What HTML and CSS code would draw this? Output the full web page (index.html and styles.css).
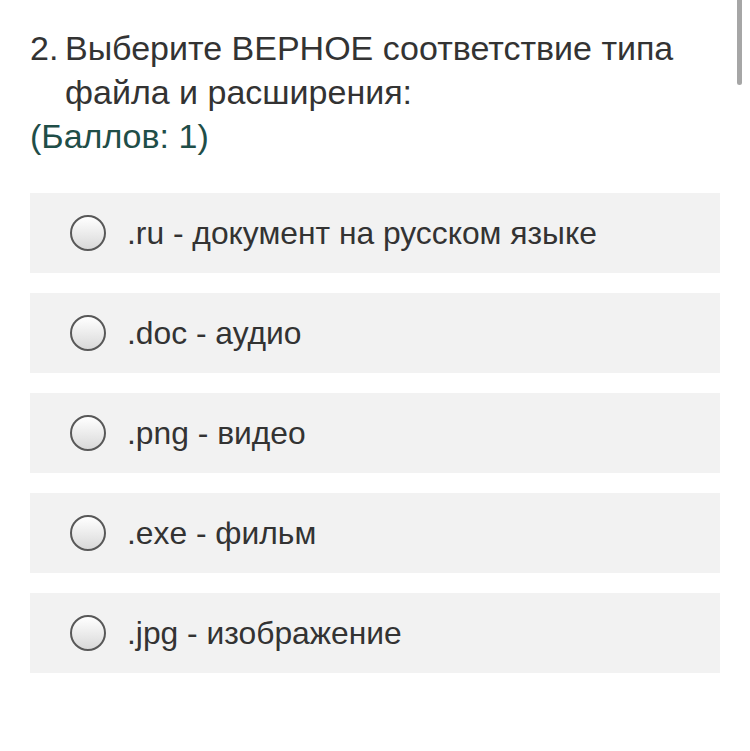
FILE: index.html
```html
<!DOCTYPE html>
<html lang="ru">
<head>
<meta charset="utf-8">
<link rel="stylesheet" href="styles.css">
</head>
<body>
<div class="scrollbar"></div>
<div class="page">
  <div class="question">
    <span class="qnum">2.</span>
    <span class="qtext">Выберите ВЕРНОЕ соответствие типа файла и расширения:</span>
  </div>
  <div class="points">(Баллов: 1)</div>
  <div class="options">
    <label class="option"><span class="radio"></span><span class="otext">.ru - документ на русском языке</span></label>
    <label class="option"><span class="radio"></span><span class="otext">.doc - аудио</span></label>
    <label class="option"><span class="radio"></span><span class="otext">.png - видео</span></label>
    <label class="option"><span class="radio"></span><span class="otext">.exe - фильм</span></label>
    <label class="option"><span class="radio"></span><span class="otext">.jpg - изображение</span></label>
  </div>
</div>
</body>
</html>
```
FILE: styles.css
```css
html, body {
  margin: 0;
  padding: 0;
  background: #ffffff;
}
body {
  font-family: "Liberation Sans", Arial, sans-serif;
  color: #333333;
  width: 750px;
  height: 751px;
  overflow: hidden;
  position: relative;
}
.scrollbar {
  position: absolute;
  right: 8px;
  top: 0;
  width: 5px;
  height: 85px;
  background: #a6a6a6;
  border-radius: 0 0 3px 3px;
}
.page {
  padding: 26px 30px 0 30px;
}
.question {
  display: flex;
  font-size: 34px;
  line-height: 44px;
  color: #333333;
}
.qnum {
  flex: 0 0 35px;
}
.qtext {
  flex: 1;
  padding-right: 40px;
}
.points {
  font-size: 34px;
  line-height: 44px;
  color: #1f4e48;
}
.options {
  margin-top: 35px;
  display: flex;
  flex-direction: column;
  gap: 20px;
  width: 690px;
}
.option {
  display: flex;
  align-items: center;
  height: 80px;
  background: #f2f2f2;
  padding-left: 40px;
  box-sizing: border-box;
}
.radio {
  width: 36px;
  height: 36px;
  box-sizing: border-box;
  border: 2px solid #585858;
  border-radius: 50%;
  background: linear-gradient(#ffffff, #d9d9d9);
  flex: 0 0 auto;
}
.otext {
  margin-left: 21px;
  font-size: 31.8px;
  color: #333333;
}
```
